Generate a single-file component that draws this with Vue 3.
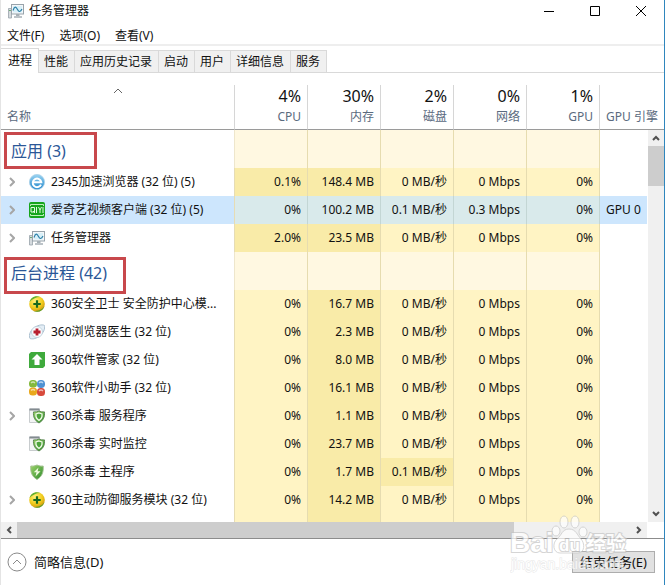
<script setup>
import { ref } from 'vue'

const menus = ['文件(F)', '选项(O)', '查看(V)']
const tabs = ['进程', '性能', '应用历史记录', '启动', '用户', '详细信息', '服务']
const activeTab = ref('进程')
const selected = ref(2)

const columns = [
  { usage: '4%', label: 'CPU' },
  { usage: '30%', label: '内存' },
  { usage: '2%', label: '磁盘' },
  { usage: '0%', label: '网络' },
  { usage: '1%', label: 'GPU' },
]

// heat: one letter per value column, h = high usage, l = low usage
const groups = [
  {
    title: '应用 (3)',
    mark: { top: 2, width: 93 },
    rows: [
      { id: 1, icon: 'browser', name: '2345加速浏览器 (32 位) (5)', expand: true, values: ['0.1%', '148.4 MB', '0 MB/秒', '0 Mbps', '0%'], heat: 'hhlll' },
      { id: 2, icon: 'video', name: '爱奇艺视频客户端 (32 位) (5)', expand: true, values: ['0%', '100.2 MB', '0.1 MB/秒', '0.3 Mbps', '0%'], heat: 'lhhll', engine: 'GPU 0' },
      { id: 3, icon: 'monitor', name: '任务管理器', expand: true, values: ['2.0%', '23.5 MB', '0 MB/秒', '0 Mbps', '0%'], heat: 'hhlll' },
    ],
  },
  {
    title: '后台进程 (42)',
    mark: { top: 5, width: 122 },
    rows: [
      { id: 4, icon: 'guard', name: '360安全卫士 安全防护中心模...', values: ['0%', '16.7 MB', '0 MB/秒', '0 Mbps', '0%'], heat: 'lhlll' },
      { id: 5, icon: 'doctor', name: '360浏览器医生 (32 位)', values: ['0%', '2.3 MB', '0 MB/秒', '0 Mbps', '0%'], heat: 'lhlll' },
      { id: 6, icon: 'manager', name: '360软件管家 (32 位)', values: ['0%', '8.0 MB', '0 MB/秒', '0 Mbps', '0%'], heat: 'lhlll' },
      { id: 7, icon: 'helper', name: '360软件小助手 (32 位)', values: ['0%', '16.1 MB', '0 MB/秒', '0 Mbps', '0%'], heat: 'lhlll' },
      { id: 8, icon: 'service', name: '360杀毒 服务程序', expand: true, values: ['0%', '1.1 MB', '0 MB/秒', '0 Mbps', '0%'], heat: 'lhlll' },
      { id: 9, icon: 'service', name: '360杀毒 实时监控', values: ['0%', '23.7 MB', '0 MB/秒', '0 Mbps', '0%'], heat: 'lhlll' },
      { id: 10, icon: 'shield', name: '360杀毒 主程序', values: ['0%', '1.7 MB', '0.1 MB/秒', '0 Mbps', '0%'], heat: 'lhhll' },
      { id: 11, icon: 'guard', name: '360主动防御服务模块 (32 位)', expand: true, values: ['0%', '14.2 MB', '0 MB/秒', '0 Mbps', '0%'], heat: 'lhlll' },
    ],
  },
]
</script>

<template>
  <div class="window">
    <svg class="defs" width="0" height="0" aria-hidden="true">
      <defs>
        <radialGradient id="g-ball" cx="40%" cy="30%" r="75%">
          <stop offset="0" stop-color="#fff27a" />
          <stop offset="0.6" stop-color="#f0cb1c" />
          <stop offset="1" stop-color="#c98f0c" />
        </radialGradient>
        <linearGradient id="g-blue" x1="0" y1="0" x2="0" y2="1">
          <stop offset="0" stop-color="#9bd4f2" />
          <stop offset="1" stop-color="#1f86cc" />
        </linearGradient>
        <linearGradient id="g-green" x1="0" y1="0" x2="1" y2="1">
          <stop offset="0" stop-color="#9ed46a" />
          <stop offset="1" stop-color="#2c8a2c" />
        </linearGradient>
      </defs>
      <symbol id="i-monitor" viewBox="0 0 16 16">
        <path d="M.5 5.500h3v9.500h-3z" fill="#d5dade" stroke="#98a2a9" stroke-width="0.8" />
        <path d="M1.200 7.500h1.600" stroke="#58a05c" />
        <rect x="3.500" y="1.500" width="12" height="9.500" fill="#f4f7f9" stroke="#98a3ab" />
        <rect x="5" y="3" width="9" height="6.500" fill="#d8f0f9" />
        <path d="M5 7.500C6.500 3 8 3.500 9.500 6.500S12.500 9 14 6" fill="none" stroke="#2c7fa6" stroke-width="1.200" />
        <path d="M8 11h3.500v2H8zM6 13.200h8v1.500H6z" fill="#a7b0b6" />
      </symbol>
      <symbol id="i-browser" viewBox="0 0 16 16">
        <circle cx="8" cy="8" r="7.600" fill="url(#g-blue)" stroke="#a9d0e8" stroke-width="0.800" />
        <path d="M12 10.600A4.300 4.300 0 1 1 12.300 8.200H4.500" fill="none" stroke="#fff" stroke-width="2" />
      </symbol>
      <symbol id="i-video" viewBox="0 0 16 16">
        <rect width="16" height="16" rx="2" fill="#16a51c" />
        <path d="M1.500 4V2.500h13V4M1.500 12v1.500h13V12" fill="none" stroke="#bdf0b8" />
        <path d="M2 5.500h3.500V10H2zM4 9l2 2M7.500 5v6M9.500 5l1.500 3l1.500-3M11 8v3M14 5v6" fill="none" stroke="#e2fbdf" />
      </symbol>
      <symbol id="i-guard" viewBox="0 0 16 16">
        <circle cx="8" cy="8" r="7.800" fill="url(#g-ball)" />
        <path d="M.5 6C2 1 7-1 11 1C7 1 3 3 .5 6z" fill="#5cae35" />
        <path d="M15.500 10c-1.500 5-6 7-11 5c5 0 8.500-1 11-5z" fill="#5a9f2a" />
        <path d="M8 4.300v7.400M4.300 8h7.400" stroke="#17691e" stroke-width="2.200" />
      </symbol>
      <symbol id="i-doctor" viewBox="0 0 16 16">
        <path d="M1 14.500C-1 11 2 5 7 2.500s8-1.500 8.500-1c.8 3-1 8-5.500 11S2.500 15 1 14.500z" fill="#e4eef6" stroke="#a3b9ca" stroke-width="0.900" />
        <circle cx="8" cy="8" r="5.500" fill="#fafcfe" stroke="#b9cbd8" stroke-width="0.800" />
        <path d="M8 4.500v7M4.500 8h7" stroke="#b81f30" stroke-width="2.800" />
      </symbol>
      <symbol id="i-manager" viewBox="0 0 16 16">
        <path d="M2 0h14v14l-2 2H0V2z" fill="#3faa3c" />
        <path d="M8 2l5.500 5.500h-3V13h-5V7.500h-3z" fill="#fff" />
      </symbol>
      <symbol id="i-helper" viewBox="0 0 16 16">
        <rect x="0" y="0" width="8" height="7.500" rx="3.500" fill="#83b93c" />
        <rect x="8" y="0" width="8" height="8" rx="3.800" fill="#4e91d2" />
        <rect x="0" y="7.500" width="8" height="8" rx="3.500" fill="#e9a81d" />
        <rect x="8" y="8" width="8" height="8" rx="3.500" fill="#d84a3c" />
        <path d="M2 3q2-2 4 0M10 3q2-2 4 0M2 10.500q2-2 4 0M10 11q2-2 4 0" fill="none" stroke="#fff" stroke-opacity="0.600" stroke-width="1.400" />
      </symbol>
      <symbol id="i-shield" viewBox="0 0 16 16">
        <path d="M8 1q3 1.500 6.200 1c.5 6-1 10.500-6.200 13.500C2.800 12.500 1.300 8 1.800 2Q5 2.500 8 1z" fill="url(#g-green)" stroke="#a3bf91" stroke-width="0.900" />
        <path d="M9.500 3.500L4.800 8.300h2.700L6.500 12.500l5-5.300H8.600z" fill="#f0fadf" />
      </symbol>
      <symbol id="i-service" viewBox="0 0 16 16">
        <path d="M.5 1h10v13.500H.5z" fill="#f3f4f4" stroke="#c2c6c8" stroke-width="0.900" />
        <path d="M.5 1.500h10" stroke="#838b90" stroke-width="2" />
        <path d="M10 3q2.500 1.200 5.500.9c.4 5-1 8.300-5.500 11.100C5.500 12.200 4.100 8.900 4.500 3.900Q7.500 4.200 10 3z" fill="url(#g-green)" stroke="#56824c" stroke-width="0.900" />
        <path d="M10 5l3 1v2.500q-.5 2.500-3 4q-2.500-1.500-3-4V6z" fill="#4da33b" stroke="#f1fae8" stroke-width="1.300" />
      </symbol>
    </svg>

    <header class="titlebar">
      <svg class="icon"><use href="#i-monitor" /></svg>
      <h1>任务管理器</h1>
      <div class="window-buttons">
        <button type="button" aria-label="最小化">
          <svg class="line" width="10" height="10"><path d="M0 5.500h10" /></svg>
        </button>
        <button type="button" aria-label="最大化">
          <svg class="line" width="10" height="10"><path d="M.5.5h9v9h-9z" /></svg>
        </button>
        <button type="button" aria-label="关闭">
          <svg class="line" width="10" height="10"><path d="M0 0l10 10M10 0L0 10" /></svg>
        </button>
      </div>
    </header>

    <nav class="menubar">
      <button v-for="menu in menus" :key="menu" type="button">{{ menu }}</button>
    </nav>

    <div class="tabs" role="tablist">
      <button
        v-for="tab in tabs"
        :key="tab"
        type="button"
        role="tab"
        :aria-selected="tab === activeTab"
        :class="{ active: tab === activeTab }"
        @click="activeTab = tab"
      >{{ tab }}</button>
    </div>

    <main class="processes">
      <table>
        <colgroup>
          <col class="col-name" />
          <col v-for="column in columns" :key="column.label" class="col-value" />
          <col />
        </colgroup>
        <thead>
          <tr>
            <th class="name-head" scope="col">
              <svg class="line sort" width="10" height="6"><path d="M1 5l4-4l4 4" /></svg>
              <span>名称</span>
            </th>
            <th v-for="column in columns" :key="column.label" scope="col">
              <strong>{{ column.usage }}</strong>
              <span>{{ column.label }}</span>
            </th>
            <th class="engine" scope="col">GPU 引擎</th>
          </tr>
        </thead>
        <tbody v-for="group in groups" :key="group.title">
          <tr class="group">
            <th scope="rowgroup">
              {{ group.title }}
              <span class="mark" :style="{ top: `${group.mark.top}px`, width: `${group.mark.width}px` }"></span>
            </th>
            <td v-for="column in columns" :key="column.label" class="value"></td>
            <td></td>
          </tr>
          <tr
            v-for="row in group.rows"
            :key="row.id"
            class="process"
            :class="{ selected: row.id === selected }"
            @click="selected = row.id"
          >
            <td>
              <div class="name">
                <button v-if="row.expand" class="expand" type="button" aria-label="展开">
                  <svg class="line" width="6" height="10"><path d="M1 1l4 4l-4 4" /></svg>
                </button>
                <span v-else class="expand"></span>
                <svg class="icon"><use :href="`#i-${row.icon}`" /></svg>
                <span>{{ row.name }}</span>
              </div>
            </td>
            <td
              v-for="(value, i) in row.values"
              :key="i"
              class="value"
              :class="{ high: row.heat[i] === 'h' }"
            >{{ value }}</td>
            <td class="engine">{{ row.engine }}</td>
          </tr>
        </tbody>
        <tbody>
          <tr class="rest">
            <td></td>
            <td v-for="(column, i) in columns" :key="column.label" class="value" :class="{ high: i === 1 }"></td>
            <td></td>
          </tr>
        </tbody>
      </table>

      <div class="scroll-y">
        <button type="button" aria-label="向上滚动">
          <svg class="line" width="8" height="6"><path d="M1 5l3-3l3 3" /></svg>
        </button>
        <div class="thumb"></div>
        <button type="button" aria-label="向下滚动">
          <svg class="line" width="8" height="6"><path d="M1 1l3 3l3-3" /></svg>
        </button>
      </div>
    </main>

    <div class="scroll-x">
      <button type="button" aria-label="向左滚动">
        <svg class="line" width="6" height="8"><path d="M5 1l-3 3l3 3" /></svg>
      </button>
      <div class="track"><div class="thumb"></div></div>
      <button type="button" aria-label="向右滚动">
        <svg class="line" width="6" height="8"><path d="M1 1l3 3l-3 3" /></svg>
      </button>
    </div>

    <footer class="footer">
      <button class="details" type="button">
        <svg class="line" width="20" height="20">
          <circle cx="10" cy="10" r="9" />
          <path d="M6 12l4-4l4 4" />
        </svg>
        <span>简略信息(D)</span>
      </button>
      <button class="end-task" type="button">结束任务(E)</button>
    </footer>

    <svg class="watermark" width="130" height="64" aria-hidden="true">
      <g class="paw">
        <ellipse cx="46" cy="18" rx="4" ry="5" />
        <ellipse cx="54" cy="9" rx="4" ry="6" />
        <ellipse cx="65" cy="9" rx="4" ry="6" />
        <ellipse cx="73" cy="19" rx="4" ry="5" />
        <path d="M59 16c7 0 8 6 12 10s4 14-3 14H50c-7 0-8-10-3-14s5-10 12-10z" />
      </g>
      <text class="brand" x="0" y="39">Bai</text>
      <text class="du" x="49" y="38">du</text>
      <text class="brand-cn" x="76" y="38">经验</text>
      <text class="site" x="1" y="56">jingyan.baidu.com</text>
    </svg>
  </div>
</template>

<style>
body {
  margin: 0;
}
</style>

<style scoped>
.window {
  position: relative;
  display: flex;
  flex-direction: column;
  box-sizing: border-box;
  min-height: 100vh;
  overflow: hidden;
  border-left: 1px solid #e4e4e4;
  border-right: 1px solid #2f86bd;
  background: #fff;
  color: #111;
  font: 12px/16px "Noto Sans", "Noto Sans CJK SC", sans-serif;
}

.defs {
  position: absolute;
}

button {
  padding: 0;
  border: 0;
  background: none;
  color: inherit;
  font: inherit;
}

.line {
  fill: none;
}

.icon {
  flex: none;
  width: 16px;
  height: 16px;
}

.titlebar {
  display: flex;
  align-items: center;
  gap: 5px;
  height: 22px;
  padding-left: 7px;
}

.titlebar h1 {
  flex: 1;
  margin: 0;
  font-size: 12px;
  font-weight: 400;
}

.window-buttons {
  display: flex;
}

.window-buttons button {
  display: grid;
  place-items: center;
  width: 46px;
  height: 22px;
}

.window-buttons svg {
  stroke: #000;
}

.menubar {
  display: flex;
  gap: 15px;
  padding: 6px 6px 0;
  border-bottom: 2px solid #eee;
}

.tabs {
  display: flex;
  align-items: flex-end;
  padding-top: 2px;
  border-bottom: 1px solid #d9d9d9;
}

.tabs button {
  height: 22px;
  padding: 1px 6px 0 5px;
  border-top: 1px solid #d9d9d9;
  border-right: 1px solid #d9d9d9;
  background: #f0f0f0;
}

.tabs .active {
  height: 25px;
  margin-bottom: -1px;
  padding: 0 6px 0 7px;
  background: #fff;
}

.processes {
  position: relative;
  padding-top: 12px;
}

table {
  width: 100%;
  table-layout: fixed;
  border-spacing: 0;
}

.col-name {
  width: 234px;
}

.col-value {
  width: 73px;
}

th,
td {
  padding: 0;
  font-weight: 400;
  white-space: nowrap;
}

thead th {
  height: 44px;
  padding-right: 6px;
  border-right: 1px solid #d6d6d6;
  border-bottom: 1px solid #9a9a9a;
  color: #5a6a7e;
  text-align: right;
  vertical-align: top;
}

thead strong {
  display: block;
  height: 24px;
  color: #111;
  font-size: 16px;
  font-weight: 400;
  line-height: 22px;
}

thead .name-head {
  padding-left: 6px;
  text-align: left;
}

.name-head span {
  display: block;
}

.sort {
  display: block;
  margin: 3px auto 15px;
  stroke: #666;
}

thead .engine {
  height: 20px;
  padding: 24px 0 0 6px;
  border-right: 0;
  text-align: left;
}

.group th {
  position: relative;
  height: 34px;
  padding: 4px 0 0 10px;
  border-right: 1px solid #eee6cc;
  color: #2b5797;
  font-size: 16px;
  line-height: 24px;
  text-align: left;
}

.mark {
  position: absolute;
  left: 3px;
  box-sizing: border-box;
  height: 37px;
  border: 3px solid #c8484c;
}

.group .value {
  background: #fff8e1;
}

.process td {
  height: 28px;
}

.process td:first-child,
.rest td:first-child {
  border-right: 1px solid #e6dcb4;
}

.name {
  display: flex;
  align-items: center;
}

.name .icon {
  margin: 0 6px;
}

.expand {
  display: grid;
  place-items: center;
  width: 22px;
  height: 16px;
}

.expand svg {
  stroke: #a6a6a6;
  stroke-width: 2;
}

td.value {
  padding-right: 6px;
  border-right: 1px solid #e6dcb0;
  background: #fff4c4;
  text-align: right;
}

td.high {
  background: #f9eba8;
}

.process .engine {
  padding-left: 6px;
}

.process.selected td {
  background: #cde6fd;
}

.process.selected .value {
  border-color: #c3d6d4;
  background: #d9eaeb;
}

.rest td {
  height: 8px;
}

.scroll-y {
  position: absolute;
  top: 57px;
  right: 0;
  bottom: 0;
  display: flex;
  flex-direction: column;
  width: 16px;
  border-left: 1px solid #fff;
  background: #f0f0f0;
}

.scroll-y button,
.scroll-x button {
  display: grid;
  place-items: center;
  width: 16px;
  height: 16px;
}

.scroll-y svg,
.scroll-x svg {
  stroke: #505050;
  stroke-width: 2;
}

.scroll-y .thumb {
  height: 40px;
  margin-bottom: auto;
  background: #cdcdcd;
}

.scroll-x {
  display: flex;
  height: 16px;
  padding-right: 17px;
  border-bottom: 1px solid #8c8c8c;
  background: #f0f0f0 content-box;
}

.scroll-x .track {
  flex: 1;
}

.scroll-x .thumb {
  width: 81%;
  height: 16px;
  background: #cdcdcd;
}

.footer {
  display: flex;
  align-items: center;
  justify-content: space-between;
  height: 46px;
  padding: 0 9px 0 6px;
  font-size: 13px;
}

.details {
  display: flex;
  align-items: center;
  gap: 7px;
}

.details svg {
  stroke: #8a8a8a;
}

.end-task {
  height: 22px;
  padding: 0 7px;
  border: 1px solid #adadad;
  background: #e1e1e1;
}

.watermark {
  position: absolute;
  right: 24px;
  bottom: 8px;
  pointer-events: none;
  opacity: 0.7;
}

.paw ellipse,
.paw path {
  fill: #fff;
  stroke: #c8c8c8;
}

.watermark text {
  fill: #fff;
  stroke: #c4c4c4;
  stroke-width: 2px;
  paint-order: stroke;
}

.watermark .brand {
  font: bold 28px "Liberation Sans", sans-serif;
}

.watermark .du {
  font: bold 17px "Liberation Sans", sans-serif;
}

.watermark .brand-cn {
  font: bold 20px "Noto Sans CJK SC", sans-serif;
}

.watermark .site {
  font: 14px "Liberation Sans", sans-serif;
  stroke: #dcdcdc;
  stroke-width: 1px;
}
</style>
